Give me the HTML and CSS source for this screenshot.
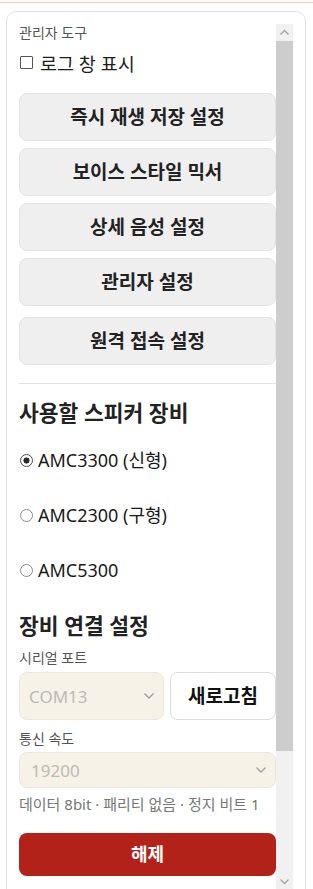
FILE: index.html
```html
<!DOCTYPE html>
<html lang="ko">
<head>
<meta charset="utf-8">
<title>관리자 도구</title>
<link rel="stylesheet" href="styles.css">
</head>
<body>
<div class="topbar"></div>
<div class="card">
  <div class="scroll">
    <div class="content">
      <div class="tool-title">관리자 도구</div>
      <label class="check-row"><input type="checkbox" class="check"><span>로그 창 표시</span></label>

      <div class="btn-group">
        <button class="btn">즉시 재생 저장 설정</button>
        <button class="btn">보이스 스타일 믹서</button>
        <button class="btn">상세 음성 설정</button>
        <button class="btn">관리자 설정</button>
        <button class="btn btn-sep">원격 접속 설정</button>
      </div>

      <hr class="divider">

      <h2 class="heading">사용할 스피커 장비</h2>
      <div class="radios">
        <label class="radio-row"><input type="radio" name="dev" class="radio" checked><span>AMC3300 (신형)</span></label>
        <label class="radio-row"><input type="radio" name="dev" class="radio"><span>AMC2300 (구형)</span></label>
        <label class="radio-row"><input type="radio" name="dev" class="radio"><span>AMC5300</span></label>
      </div>

      <h2 class="heading heading-2">장비 연결 설정</h2>
      <div class="field-label">시리얼 포트</div>
      <div class="port-row">
        <select class="select" disabled><option>COM13</option></select>
        <button class="refresh">새로고침</button>
      </div>
      <div class="field-label field-label-2">통신 속도</div>
      <select class="select select-baud" disabled><option>19200</option></select>
      <div class="note">데이터 8bit · 패리티 없음 · 정지 비트 1</div>
      <button class="danger">해제</button>
    </div>
    <div class="scrollbar" aria-hidden="true">
      <div class="sb-btn">
        <svg width="17" height="17" viewBox="0 0 17 17"><path d="M4.5 10.5 L8.5 6.5 L12.5 10.5" fill="none" stroke="#a3a3a3" stroke-width="1.3"/></svg>
      </div>
      <div class="sb-track"><div class="sb-thumb"></div></div>
      <div class="sb-btn">
        <svg width="17" height="17" viewBox="0 0 17 17"><path d="M4.5 6.5 L8.5 10.5 L12.5 6.5" fill="none" stroke="#a3a3a3" stroke-width="1.3"/></svg>
      </div>
    </div>
  </div>
</div>
</body>
</html>
```
FILE: styles.css
```css
html, body {
  margin: 0;
  padding: 0;
  overflow: hidden;
  background: #ffffff;
}

body {
  font-family: "Noto Sans", "Noto Sans CJK KR", sans-serif;
  color: #222222;
}

.topbar {
  height: 2px;
  background: #fbf9f5;
  border-bottom: 1px solid #e2d4c3;
}

.card {
  margin: 8px 7px 0 6px;
  border: 1px solid #e2e2e2;
  border-radius: 10px;
  padding: 12px;
}

.scroll {
  display: flex;
  height: 866px;
  overflow: hidden;
}

.content {
  flex: 1;
  min-width: 0;
  overflow: hidden;
}

.scrollbar {
  flex: none;
  width: 17px;
  display: flex;
  flex-direction: column;
  background: #f1f1f1;
}

.sb-btn {
  height: 17px;
  flex: none;
}

.sb-btn svg {
  display: block;
}

.sb-track {
  flex: 1;
}

.sb-thumb {
  height: 710px;
  background: #cdcdcd;
}

.tool-title {
  font-size: 14px;
  line-height: 18px;
  color: #555555;
}

.check-row {
  display: flex;
  align-items: center;
  gap: 7px;
  margin-top: 10px;
  font-size: 18.5px;
  line-height: 24px;
  color: #1e1e1e;
}

.check {
  appearance: none;
  -webkit-appearance: none;
  width: 13px;
  height: 13px;
  margin: 0 0 4px 1px;
  border: 1px solid #555555;
  border-radius: 1px;
  background: #ffffff;
  flex: none;
}

.btn-group {
  display: flex;
  flex-direction: column;
  gap: 7px;
  margin-top: 17px;
}

.btn {
  font-family: inherit;
  font-size: 19px;
  font-weight: 700;
  line-height: 24px;
  color: #222222;
  background: #efefef;
  border: 1px solid #e3e3e3;
  border-radius: 8px;
  padding: 11px 8px;
  width: 100%;
}

.btn-sep {
  margin-top: 4px;
}

.divider {
  border: 0;
  border-top: 1px solid #e3e3e3;
  margin: 18px 0 0 0;
}

.heading {
  font-size: 21.5px;
  font-weight: 700;
  line-height: 28px;
  margin: 15px 0 0 0;
  color: #222222;
}

.radios {
  margin-top: 6px;
}

.radio-row {
  display: flex;
  align-items: center;
  gap: 5px;
  padding: 16px 0;
  font-size: 18px;
  line-height: 23px;
  color: #1a1a1a;
}

.radio {
  appearance: none;
  -webkit-appearance: none;
  width: 13px;
  height: 13px;
  margin: 0 0 0 1px;
  border: 1px solid #8a8a8a;
  border-radius: 50%;
  background: #ffffff;
  flex: none;
}

.radio:checked {
  border-color: #4a4a4a;
  background: radial-gradient(circle, #2a2a2a 0 2.8px, #ffffff 3.3px);
}

.heading-2 {
  margin-top: 14px;
}

.field-label {
  font-size: 14px;
  line-height: 18px;
  color: #555555;
  margin-top: 9px;
}

.field-label-2 {
  margin-top: 10px;
}

.port-row {
  display: flex;
  gap: 6px;
  margin-top: 5px;
}

.select {
  appearance: none;
  -webkit-appearance: none;
  font-family: inherit;
  font-size: 17px;
  color: #bdbab4;
  background: #f6f2e8 url("data:image/svg+xml;utf8,<svg xmlns='http://www.w3.org/2000/svg' width='12' height='8'><path d='M1.5 1.5 L6 6 L10.5 1.5' fill='none' stroke='%23a0a0a0' stroke-width='1.4'/></svg>") no-repeat right 8px center;
  border: 1px solid #ebe6dc;
  border-radius: 8px;
  padding: 0 30px 0 9px;
  opacity: 1;
}

.port-row .select {
  flex: 1;
  min-width: 0;
}

.refresh {
  font-family: inherit;
  font-size: 19px;
  font-weight: 700;
  line-height: 24px;
  color: #111111;
  background: #ffffff;
  border: 1px solid #dddddd;
  border-radius: 8px;
  padding: 11px 17px;
  flex: none;
}

.select-baud {
  display: block;
  width: 100%;
  height: 36px;
  margin-top: 4px;
  padding-left: 11px;
}

.note {
  font-size: 15px;
  line-height: 20px;
  color: #777777;
  margin-top: 6px;
}

.danger {
  display: block;
  width: 100%;
  margin-top: 19px;
  font-family: inherit;
  font-size: 18px;
  font-weight: 700;
  line-height: 23px;
  color: #ffffff;
  background: #b22219;
  border: 0;
  border-radius: 8px;
  padding: 10px 8px;
}
```
